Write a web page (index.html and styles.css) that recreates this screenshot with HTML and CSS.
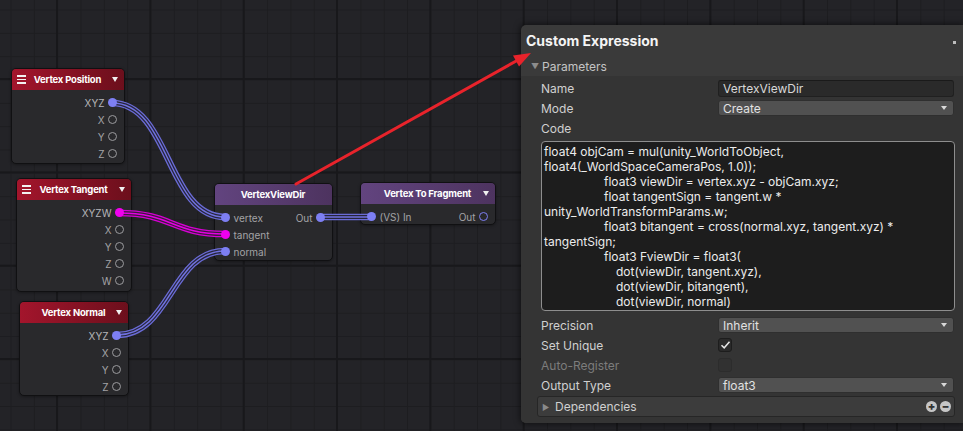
FILE: index.html
```html
<!DOCTYPE html>
<html>
<head>
<meta charset="utf-8">
<link rel="stylesheet" href="styles.css">
</head>
<body>
<div class="canvas">
  <div class="node red n-pos">
    <div class="head"><span class="menu"><i></i><i></i><i></i></span><span class="title">Vertex Position</span><span class="tri"></span></div>
    <div class="body right">
      <div class="port"><span class="lbl hi">XYZ</span><b class="dot blue"></b></div>
      <div class="port"><span class="lbl">X</span><b class="dot ring"></b></div>
      <div class="port"><span class="lbl">Y</span><b class="dot ring"></b></div>
      <div class="port"><span class="lbl">Z</span><b class="dot ring"></b></div>
    </div>
  </div>

  <div class="node red n-tan">
    <div class="head"><span class="menu"><i></i><i></i><i></i></span><span class="title">Vertex Tangent</span><span class="tri"></span></div>
    <div class="body right">
      <div class="port"><span class="lbl hi">XYZW</span><b class="dot mag"></b></div>
      <div class="port"><span class="lbl">X</span><b class="dot ring"></b></div>
      <div class="port"><span class="lbl">Y</span><b class="dot ring"></b></div>
      <div class="port"><span class="lbl">Z</span><b class="dot ring"></b></div>
      <div class="port"><span class="lbl">W</span><b class="dot ring"></b></div>
    </div>
  </div>

  <div class="node red n-nor">
    <div class="head"><span class="side"></span><span class="title">Vertex Normal</span><span class="tri"></span></div>
    <div class="body right">
      <div class="port"><span class="lbl hi">XYZ</span><b class="dot blue"></b></div>
      <div class="port"><span class="lbl">X</span><b class="dot ring"></b></div>
      <div class="port"><span class="lbl">Y</span><b class="dot ring"></b></div>
      <div class="port"><span class="lbl">Z</span><b class="dot ring"></b></div>
    </div>
  </div>

  <div class="node purple n-vvd">
    <div class="head"><span class="side"></span><span class="title">VertexViewDir</span><span class="side"></span></div>
    <div class="body io">
      <div class="inputs">
        <div class="port in"><b class="dot blue"></b><span class="lbl">vertex</span></div>
        <div class="port in"><b class="dot mag"></b><span class="lbl">tangent</span></div>
        <div class="port in"><b class="dot blue"></b><span class="lbl">normal</span></div>
      </div>
      <div class="outputs">
        <div class="port"><span class="lbl">Out</span><b class="dot blue"></b></div>
      </div>
    </div>
  </div>

  <div class="node purple n-vtf">
    <div class="head"><span class="side"></span><span class="title">Vertex To Fragment</span><span class="tri"></span></div>
    <div class="body io">
      <div class="inputs">
        <div class="port in"><b class="dot blue"></b><span class="lbl">(VS) In</span></div>
      </div>
      <div class="outputs">
        <div class="port"><span class="lbl">Out</span><b class="dot ring-blue"></b></div>
      </div>
    </div>
  </div>

  <svg class="wires" width="963" height="431" viewBox="0 0 963 431">
    <defs>
      <path id="wp" d="M112 103 C 170 103, 167 217, 225 217"/>
      <path id="wn" d="M117 335 C 171 335, 171 251, 225 251"/>
      <path id="wo" d="M320 217 L 372 217"/>
      <path id="wt" d="M119 213 C 172 213, 172 234, 225 234"/>
    </defs>
    <g class="blue-outer"><use href="#wp"/><use href="#wn"/><use href="#wo"/></g>
    <g class="blue-gap"><use href="#wp"/><use href="#wn"/><use href="#wo"/></g>
    <g class="blue-core"><use href="#wp"/><use href="#wn"/><use href="#wo"/></g>
    <g class="mag-outer"><use href="#wt"/></g>
    <g class="mag-gap"><use href="#wt"/></g>
    <g class="mag-core"><use href="#wt"/></g>
  </svg>

  <div class="inspector">
    <div class="ins-head"><span class="ins-title">Custom Expression</span><span class="grip"></span></div>
    <div class="foldout"><span class="fold-tri">&#9660;</span><span>Parameters</span></div>
    <div class="ins-body">
      <div class="row"><span class="rl">Name</span><span class="textfield">VertexViewDir</span></div>
      <div class="row"><span class="rl">Mode</span><span class="dropdown">Create<i class="dd-arrow"></i></span></div>
      <div class="row"><span class="rl">Code</span></div>
      <div class="code">
        <div class="ln">float4 objCam = mul(unity_WorldToObject,</div>
        <div class="ln">float4(_WorldSpaceCameraPos, 1.0));</div>
        <div class="ln i1">float3 viewDir = vertex.xyz - objCam.xyz;</div>
        <div class="ln i1">float tangentSign = tangent.w *</div>
        <div class="ln">unity_WorldTransformParams.w;</div>
        <div class="ln i1">float3 bitangent = cross(normal.xyz, tangent.xyz) *</div>
        <div class="ln">tangentSign;</div>
        <div class="ln i1">float3 FviewDir = float3(</div>
        <div class="ln i2">dot(viewDir, tangent.xyz),</div>
        <div class="ln i2">dot(viewDir, bitangent),</div>
        <div class="ln i2">dot(viewDir, normal)</div>
      </div>
      <div class="row first-after"><span class="rl">Precision</span><span class="dropdown">Inherit<i class="dd-arrow"></i></span></div>
      <div class="row"><span class="rl">Set Unique</span><span class="check on"><svg width="11" height="10" viewBox="0 0 11 10"><path d="M1.5 5.2 L4.2 7.8 L9.5 1.8" fill="none" stroke="#e6e6e6" stroke-width="1.5"/></svg></span></div>
      <div class="row dim"><span class="rl">Auto-Register</span><span class="check off"></span></div>
      <div class="row"><span class="rl">Output Type</span><span class="dropdown">float3<i class="dd-arrow"></i></span></div>
      <div class="deps"><span class="deps-tri">&#9654;</span><span class="deps-lbl">Dependencies</span><span class="pm"><b class="circ">+</b><b class="circ">&minus;</b></span></div>
    </div>
  </div>

  <svg class="arrow" width="963" height="431" viewBox="0 0 963 431">
    <line x1="296" y1="184" x2="518" y2="60" stroke="#e8232b" stroke-width="3" stroke-linecap="round"/>
    <polygon points="531,53 513,55.4 519,66.4" fill="#e8232b"/>
  </svg>
</div>
</body>
</html>
```

FILE: styles.css
```css
html, body {
  margin: 0;
  padding: 0;
}
body {
  width: 963px;
  height: 431px;
  overflow: hidden;
  font-family: "Inter", "Noto Sans", sans-serif;
}
.canvas {
  position: relative;
  width: 963px;
  height: 431px;
  background-color: #232327;
  background-image:
    linear-gradient(to right, #18181b 2px, transparent 2px),
    linear-gradient(to bottom, #18181b 2px, transparent 2px),
    linear-gradient(to right, #1d1d20 1px, transparent 1px),
    linear-gradient(to bottom, #1d1d20 1px, transparent 1px);
  background-size: 93.33px 93.33px, 93.33px 93.33px, 23.33px 23.33px, 23.33px 23.33px;
  background-position: 56px 78px, 56px 78px, 10.5px 9.5px, 10.5px 9.5px;
  overflow: hidden;
}

/* nodes */
.node {
  position: absolute;
  box-sizing: border-box;
  background: #29292c;
  border: 1px solid #101012;
  border-radius: 5px;
  box-shadow: 0 1px 3px rgba(0,0,0,0.35);
}
.n-pos { left: 11px; top: 68px; width: 114px; height: 96px; }
.n-tan { left: 16px; top: 178px; width: 116px; height: 114px; }
.n-nor { left: 19px; top: 301px; width: 110px; height: 95px; }
.n-vvd { left: 214px; top: 183px; width: 119px; height: 78px; }
.n-vtf { left: 360px; top: 182px; width: 136px; height: 43px; }

.head {
  height: 21px;
  display: grid;
  grid-template-columns: 1fr auto 1fr;
  align-items: center;
  padding: 0 6px 0 5px;
  border-radius: 4px 4px 0 0;
  color: #fff;
}
.red .head { background: linear-gradient(to right, #a3152c, #6c0f1c); }
.purple .head { background: linear-gradient(to right, #62447f, #4d335f); }
.title {
  font-size: 9.5px;
  font-weight: 700;
  letter-spacing: -0.2px;
  white-space: nowrap;
}
.menu {
  display: flex;
  flex-direction: column;
  gap: 1.6px;
  width: 9px;
  justify-self: start;
}
.menu i {
  display: block;
  height: 1.7px;
  background: #f2f2f2;
}
.tri {
  justify-self: end;
  width: 0;
  height: 0;
  border-left: 3.5px solid transparent;
  border-right: 3.5px solid transparent;
  border-top: 5px solid #f0f0f0;
}
.body {
  padding-top: 4px;
}
.body.right {
  display: flex;
  flex-direction: column;
  align-items: flex-end;
  padding-right: 7.5px;
}
.body.io {
  display: flex;
  justify-content: space-between;
  padding-left: 5.5px;
  padding-right: 7.5px;
}
.port {
  height: 17px;
  display: flex;
  align-items: center;
  gap: 3px;
}
.port.in { gap: 4px; }
.lbl {
  font-size: 10px;
  color: #a3a3a6;
  line-height: 1;
}
.lbl.hi { color: #b4b4b8; }
.dot {
  display: block;
  box-sizing: border-box;
  width: 9px;
  height: 9px;
  border-radius: 50%;
  position: relative;
  z-index: 2;
}
.dot.blue { background: #7d7ff3; }
.dot.mag { background: #f000ee; }
.dot.ring { border: 1.6px solid #9b9b9e; }
.dot.ring-blue { border: 1.8px solid #7d7ff3; }

/* wires */
.wires {
  position: absolute;
  left: 0;
  top: 0;
  z-index: 1;
  pointer-events: none;
}
.wires use {
  fill: none;
}
.blue-outer { stroke: #6a6bd6; stroke-width: 6.5; fill: none; }
.blue-gap { stroke: #26263a; stroke-width: 4; fill: none; }
.blue-core { stroke: #7172e0; stroke-width: 1.4; fill: none; }
.mag-outer { stroke: #d600d4; stroke-width: 6.5; fill: none; }
.mag-gap { stroke: #3a1a3c; stroke-width: 4; fill: none; }
.mag-core { stroke: #e400e2; stroke-width: 1.4; fill: none; }

/* inspector panel */
.inspector {
  position: absolute;
  left: 521px;
  top: 25px;
  width: 442px;
  height: 398px;
  box-sizing: border-box;
  background: #3a3a3a;
  border-radius: 5px 0 0 5px;
  box-shadow: 0 0 6px 1px rgba(0,0,0,0.55);
  z-index: 3;
  color: #d2d2d2;
  font-size: 12px;
  display: flex;
  flex-direction: column;
}
.ins-head {
  height: 31px;
  display: flex;
  align-items: center;
  justify-content: space-between;
  padding: 0 7px 0 5px;
}
.ins-title {
  font-size: 14px;
  font-weight: 700;
  color: #f4f4f4;
}
.grip {
  width: 3px;
  height: 3px;
  background: #bdbdbd;
  margin-top: 4px;
}
.foldout {
  height: 20px;
  display: flex;
  align-items: center;
  gap: 3px;
  padding-left: 10px;
  color: #c4c4c4;
}
.fold-tri {
  font-size: 8px;
  color: #8c8c8c;
}
.ins-body {
  flex: 1;
  background: #343434;
  padding: 2px 8px 6px 20px;
  display: flex;
  flex-direction: column;
  border-radius: 0 0 0 5px;
}
.row {
  height: 20px;
  display: grid;
  grid-template-columns: 177px 1fr;
  align-items: center;
  padding-right: 1px;
}
.rl {
  color: #d0d0d0;
}
.row.dim .rl { color: #7c7c7c; }
.textfield {
  height: 17px;
  box-sizing: border-box;
  background: #2a2a2a;
  border: 1px solid #202020;
  border-top-color: #1a1a1a;
  border-radius: 3px;
  padding: 0 4px;
  display: flex;
  align-items: center;
  color: #d8d8d8;
}
.dropdown {
  height: 16px;
  box-sizing: border-box;
  background: #515151;
  border: 1px solid #2f2f2f;
  border-radius: 3px;
  padding: 0 4px;
  display: flex;
  align-items: center;
  justify-content: space-between;
  color: #e2e2e2;
}
.dd-arrow {
  width: 0;
  height: 0;
  border-left: 3.5px solid transparent;
  border-right: 3.5px solid transparent;
  border-top: 4px solid #d8d8d8;
  margin-right: 2px;
}
.code {
  margin-top: 3px;
  height: 170px;
  box-sizing: border-box;
  background: #1d1d1d;
  border: 1px solid #8e8e8e;
  border-radius: 4px;
  padding: 2px 2px 1px 2px;
  color: #ececec;
  overflow: hidden;
}
.ln {
  height: 15px;
  line-height: 15px;
  white-space: pre;
}
.code .i1 { padding-left: 60px; }
.code .i2 { padding-left: 72px; }
.first-after { margin-top: 4px; }
.check {
  width: 14px;
  height: 14px;
  box-sizing: border-box;
  border-radius: 3px;
  display: flex;
  align-items: center;
  justify-content: center;
}
.check.on {
  background: #2a2a2a;
  border: 1px solid #1d1d1d;
}
.check.off {
  background: #313131;
  border: 1px solid #2c2c2c;
}
.deps {
  margin-top: 1px;
  margin-left: -4px;
  height: 21px;
  box-sizing: border-box;
  background: #3c3c3c;
  border: 1px solid #262626;
  border-radius: 3px;
  display: flex;
  align-items: center;
  padding-left: 4px;
  padding-right: 3px;
}
.deps-tri {
  font-size: 8px;
  color: #8a8a8a;
  width: 13px;
}
.deps-lbl {
  color: #d0d0d0;
  flex: 1;
}
.pm {
  display: flex;
  gap: 3px;
}
.circ {
  width: 11px;
  height: 11px;
  border-radius: 50%;
  background: #c6c6c6;
  color: #333;
  font-size: 11px;
  font-weight: 900;
  line-height: 11px;
  text-align: center;
  display: block;
}

/* red arrow */
.arrow {
  position: absolute;
  left: 0;
  top: 0;
  z-index: 5;
  pointer-events: none;
}
```
